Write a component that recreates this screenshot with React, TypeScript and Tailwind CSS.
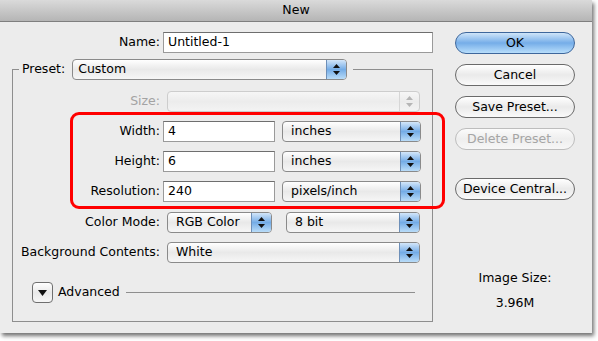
import type { ReactNode } from 'react';

function Arrows({ disabled }: { disabled?: boolean }) {
  const fill = disabled ? '#b5b5b5' : '#111';
  return (
    <svg width="7" height="11" viewBox="0 0 7 11">
      <polygon points="0,4 3.5,0 7,4" fill={fill} />
      <polygon points="0,7 3.5,11 7,7" fill={fill} />
    </svg>
  );
}

function Popup({ label, className = '', disabled, pad = 'pl-[8px]' }: { label?: string; className?: string; disabled?: boolean; pad?: string }) {
  return (
    <div
      className={`flex h-[21px] shrink-0 overflow-hidden rounded-[4px] border ${
        disabled
          ? 'border-[#cdcdcd] bg-gradient-to-b from-[#f6f6f6] via-[#ececec] to-[#f3f3f3]'
          : 'border-[#8a8a8a] bg-gradient-to-b from-white via-[#e9e9e9] to-[#f6f6f6]'
      } ${className}`}
    >
      <div className={`flex flex-1 items-center ${pad} text-[12.5px] text-black`}>{label}</div>
      <div
        className={`flex w-[20px] items-center justify-center border-l ${
          disabled
            ? 'border-[#d6d6d6]'
            : 'border-[#6d8fb8] bg-gradient-to-b from-[#d3e6f9] via-[#74ace6] to-[#b9dcf8]'
        }`}
      >
        <Arrows disabled={disabled} />
      </div>
    </div>
  );
}

function TextBox({ value, className = '' }: { value: string; className?: string }) {
  return (
    <div className={`flex h-[21px] shrink-0 items-center border border-[#9a9a9a] border-t-[#6e6e6e] bg-white pl-[4px] text-[12.5px] text-black ${className}`}>
      {value}
    </div>
  );
}

function AquaButton({ children, primary, disabled, className = '' }: { children: ReactNode; primary?: boolean; disabled?: boolean; className?: string }) {
  return (
    <div
      className={`flex h-[22px] w-[120px] items-center justify-center rounded-full border text-[12.5px] ${
        primary
          ? 'border-[#3e679c] bg-gradient-to-b from-[#cfe5f9] via-[#75ade8] to-[#b8defb] text-black'
          : disabled
          ? 'border-[#bdbdbd] bg-gradient-to-b from-[#fbfbfb] via-[#eeeeee] to-[#f7f7f7] text-[#a5a5a5]'
          : 'border-[#6a6a6a] bg-gradient-to-b from-white via-[#eaeaea] to-[#fafafa] text-black'
      } ${className}`}
    >
      {children}
    </div>
  );
}

function Row({ label, children, className = '', muted }: { label: string; children: ReactNode; className?: string; muted?: boolean }) {
  return (
    <div className={`flex h-[21px] items-center ${className}`}>
      <div className={`w-[147px] shrink-0 whitespace-nowrap text-right text-[12.5px] ${muted ? 'text-[#a3a3a3]' : 'text-black'}`}>{label}</div>
      {children}
    </div>
  );
}

export default function App() {
  return (
    <div className="relative h-[341px] w-[598px] bg-white font-['DejaVu_Sans',sans-serif]">
      <div className="h-[333px] w-[592px] bg-[#ececec] shadow-[2px_3px_4px_rgba(0,0,0,0.55)]">
        {/* Title bar */}
        <div className="flex h-[22px] items-center justify-center border-b border-[#7f7f7f] bg-gradient-to-b from-[#dadada] to-[#b5b5b5] text-[12.5px] text-black">
          New
        </div>

        <div className="flex">
          {/* Left column */}
          <div className="w-[433px]">
            <div className="mt-[10px] flex h-[21px] items-center">
              <div className="w-[160px] text-right text-[12.5px]">Name:</div>
              <TextBox value="Untitled-1" className="ml-[3px] w-[270px]" />
            </div>

            <fieldset className="ml-[12px] mt-[6px] h-[263px] w-[421px] border border-[#8e8e8e]">
              <legend className="ml-[6px] pl-[3px] pr-[6px]">
                <div className="flex items-center">
                  <span className="text-[12.5px]">Preset:</span>
                  <Popup label="Custom" pad="pl-[5px]" className="ml-[7px] w-[275px]" />
                </div>
              </legend>

              <Row label="Size:" muted className="mt-[11px]">
                <Popup disabled className="ml-[7px] w-[253px]" />
              </Row>
              <Row label="Width:" className="mt-[9px]">
                <TextBox value="4" className="ml-[3px] w-[112px]" />
                <Popup label="inches" className="ml-[7px] w-[139px]" />
              </Row>
              <Row label="Height:" className="mt-[9px]">
                <TextBox value="6" className="ml-[3px] w-[112px]" />
                <Popup label="inches" className="ml-[7px] w-[139px]" />
              </Row>
              <Row label="Resolution:" className="mt-[9px]">
                <TextBox value="240" className="ml-[3px] w-[112px]" />
                <Popup label="pixels/inch" className="ml-[7px] w-[139px]" />
              </Row>
              <Row label="Color Mode:" className="mt-[10px]">
                <Popup label="RGB Color" className="ml-[7px] w-[105px]" />
                <Popup label="8 bit" className="ml-[14px] w-[134px]" />
              </Row>
              <Row label="Background Contents:" className="mt-[9px]">
                <Popup label="White" className="ml-[7px] w-[253px]" />
              </Row>

              <div className="ml-[19px] mr-[17px] mt-[19px] flex items-center">
                <div className="flex h-[21px] w-[21px] items-center justify-center rounded-[4px] border border-[#6f6f6f] bg-gradient-to-b from-white via-[#e9e9e9] to-[#f6f6f6]">
                  <svg width="9" height="6" viewBox="0 0 9 6">
                    <polygon points="0,0 9,0 4.5,6" fill="#111" />
                  </svg>
                </div>
                <span className="ml-[5px] text-[12.5px]">Advanced</span>
                <div className="ml-[6px] flex-1 border-t border-[#8e8e8e]" />
              </div>
            </fieldset>
          </div>

          {/* Right column */}
          <div className="ml-[22px] flex flex-col">
            <AquaButton primary className="mt-[10px]">OK</AquaButton>
            <AquaButton className="mt-[10px]">Cancel</AquaButton>
            <AquaButton className="mt-[10px]">Save Preset...</AquaButton>
            <AquaButton disabled className="mt-[10px]">Delete Preset...</AquaButton>
            <AquaButton className="mt-[28px]">Device Central...</AquaButton>
            <div className="mt-[70px] text-center text-[12.5px] leading-[16px]">Image Size:</div>
            <div className="mt-[9px] text-center text-[12.5px] leading-[16px]">3.96M</div>
          </div>
        </div>
      </div>

      {/* red annotation */}
      <div className="pointer-events-none absolute left-[70px] top-[112px] h-[97px] w-[375px] rounded-[9px] border-[3px] border-[#ff0000]" />
    </div>
  );
}
